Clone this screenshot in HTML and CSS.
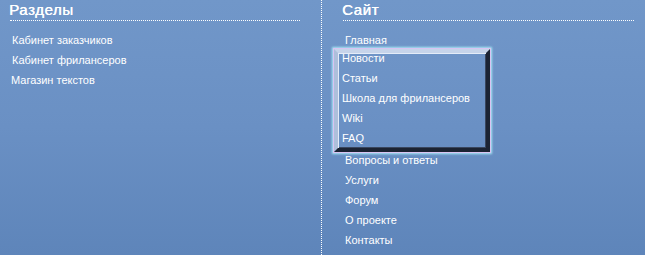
FILE: index.html
```html
<!DOCTYPE html>
<html lang="ru">
<head>
<meta charset="utf-8">
<title>Меню</title>
<link rel="stylesheet" href="styles.css">
</head>
<body>
<div class="page">
  <section class="col col-left">
    <h2 class="head">Разделы</h2>
    <ul class="links">
      <li>Кабинет заказчиков</li>
      <li>Кабинет фрилансеров</li>
      <li class="nudge">Магазин текстов</li>
    </ul>
  </section>
  <section class="col col-right">
    <h2 class="head">Сайт</h2>
    <ul class="links">
      <li>Главная</li>
      <li class="box">
        <ul class="box-list">
          <li>Новости</li>
          <li>Статьи</li>
          <li>Школа для фрилансеров</li>
          <li>Wiki</li>
          <li>FAQ</li>
        </ul>
      </li>
      <li>Вопросы и ответы</li>
      <li>Услуги</li>
      <li>Форум</li>
      <li>О проекте</li>
      <li>Контакты</li>
    </ul>
  </section>
</div>
</body>
</html>
```
FILE: styles.css
```css
html, body {
  margin: 0;
  padding: 0;
  height: 100%;
}
body {
  background: linear-gradient(to bottom, #7197c9 0%, #6a90c4 50%, #5e85ba 100%);
  color: #ffffff;
  font-family: "Liberation Sans", Arial, sans-serif;
  overflow: hidden;
}
.page {
  display: grid;
  grid-template-columns: 322px 1fr;
  height: 255px;
}
.col-left {
  border-right: 1px dotted #ffffff;
  padding: 0 21px 0 10px;
}
.col-right {
  padding: 0 11px 0 21px;
}
.head {
  margin: 0;
  font-size: 15px;
  line-height: 19px;
  font-weight: normal;
  letter-spacing: 0.6px;
  text-indent: -1px;
  padding-bottom: 1px;
  border-bottom: 1px dotted #ffffff;
  text-shadow: 0.4px 0 0 #ffffff;
}
.links {
  list-style: none;
  margin: 9px 0 0 0;
  padding: 0 0 0 2px;
  font-size: 11px;
  line-height: 20px;
  letter-spacing: 0;
}
.links li.nudge {
  text-indent: -1px;
}
.box {
  box-sizing: border-box;
  width: 156px;
  height: 103px;
  margin: -1px 0 -2px -11px;
  padding: 0 0 0 4px;
  border: 4px solid;
  border-color: #c6d4ea #1b2333 #1b2333 #aebfdb;
  box-shadow: inset 1px 1px 0 #e4ecf8, inset -1px -1px 0 #39465e, 0 0 0 1px #d9c4f2, 0 0 2px 2px #a9e8f6;
  overflow: hidden;
}
.box-list {
  list-style: none;
  margin: -5px 0 0 0;
  padding: 0;
}
```
